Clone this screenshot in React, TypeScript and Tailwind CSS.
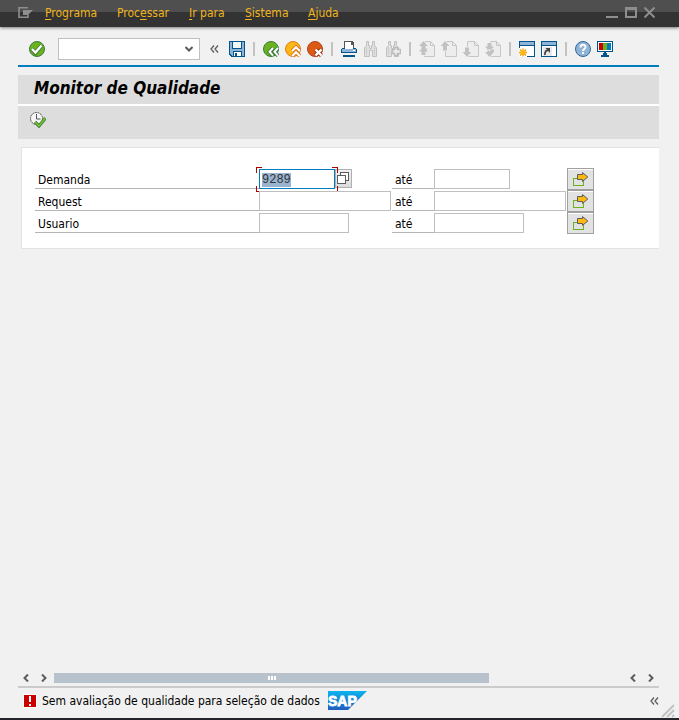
import { useEffect, useRef } from "react";
import type { ReactNode } from "react";

function Icon({ children }: { children: ReactNode }) {
  return (
    <svg viewBox="0 0 16 16" className="block size-4 shrink-0" aria-hidden>
      {children}
    </svg>
  );
}

function ToolButton({ label, disabled, children }: { label: string; disabled?: boolean; children: ReactNode }) {
  return (
    <button type="button" aria-label={label} title={label} disabled={disabled} className="block size-4 shrink-0">
      <Icon>{children}</Icon>
    </button>
  );
}

function Separator() {
  return <span className="mx-0.5 h-3.5 w-0.5 shrink-0 bg-[#c2c2c2]" />;
}

function DoubleChevron() {
  return (
    <svg viewBox="0 0 9 8" className="block h-2 w-[9px]" aria-hidden>
      <path d="M4 .5 1 4l3 3.5M8 .5 5 4l3 3.5" fill="none" stroke="#5c5c5c" strokeWidth="1.3" />
    </svg>
  );
}

function BackGlyph() {
  return (
    <>
      <circle cx="8" cy="8" r="7.500" fill="#6cb11e" stroke="#3c7d3a" />
      <path d="M10 7 6.500 10.800 10 14.600M15 7l-3.500 3.800 3.500 3.800" fill="none" stroke="#3c7d3a" strokeWidth="4" />
      <path d="M10 7 6.500 10.800 10 14.600M15 7l-3.500 3.800 3.500 3.800" fill="none" stroke="#fff" strokeWidth="2" />
    </>
  );
}

function ExitGlyph() {
  return (
    <>
      <circle cx="8" cy="8" r="7.500" fill="#fdb913" stroke="#e07b1c" />
      <path d="M7.200 10 11 6.200l3.800 3.800M7.200 15 11 11.200l3.800 3.800" fill="none" stroke="#e07b1c" strokeWidth="4" />
      <path d="M7.200 10 11 6.200l3.800 3.800M7.200 15 11 11.200l3.800 3.800" fill="none" stroke="#fff" strokeWidth="2" />
    </>
  );
}

function CancelGlyph() {
  return (
    <>
      <circle cx="8" cy="8" r="7.500" fill="#dc5a14" stroke="#ae4420" />
      <path d="m8.500 8.500 6 6M14.500 8.500l-6 6" stroke="#a33a18" strokeWidth="4.400" />
      <path d="m8.500 8.500 6 6M14.500 8.500l-6 6" stroke="#fff" strokeWidth="2.400" />
    </>
  );
}

function SaveGlyph() {
  return (
    <g shapeRendering="crispEdges">
      <path d="M0 0h16v16H2L0 14z" fill="#00568c" />
      <path d="M1 1h14v14H3L1 13z" fill="#91b3d7" />
      <path d="M3 1h10v7H3z" fill="#00568c" />
      <path d="M4 1h8v6H4z" fill="#f6f6f6" />
      <path d="M4 10h9v5H4z" fill="#00568c" />
      <path d="M5 11h7v4H5z" fill="#fff" />
      <path d="M6 12h2v3H6z" fill="#00568c" />
    </g>
  );
}

function PrintGlyph() {
  return (
    <g shapeRendering="crispEdges">
      <path d="M3 0h8l2 2v6H3z" fill="#555" />
      <path d="M4 1h6v3h2v4H4z" fill="#fff" />
      <path d="M10 1h1v2h2v1h-3z" fill="#555" />
      <path d="M1 7h14v1h1v4H0V8h1z" fill="#00568c" />
      <path d="M1 8h14v3H1z" fill="#91b3d7" />
      <path d="M4 6h8v2H4z" fill="#fff" />
      <path d="M12 9h2v1h-2z" fill="#fff" />
      <path d="M2 14h12v2H2z" fill="#00568c" />
    </g>
  );
}

function BinocularsGlyph({ plus }: { plus?: boolean }) {
  return (
    <>
      <path
        d="M3.500.5h2v4h1v3h2v-3h1v-4h2v4l2 2v9h-4v-6h-3v6h-5v-9l2-2z"
        fill="#e0e0e0"
        stroke="#c0c0c0"
      />
      <path d="M3.500 6v8M11.500 6v8" stroke="#cdcdcd" />
      {plus && (
        <path d="M9.500 6.500h3v2h3v4h-3v2h-3v-2h-2v-4h2z" fill="#ededed" stroke="#bcbcbc" strokeWidth="1.500" />
      )}
    </>
  );
}

const pageArrows = {
  first: "M4.500 0 9 5H6.500v2.500H9L6.500 10v4h-4v-4L0 11 2.500 8V5H0zM4.500 5.500 9 10.500H0z",
  previous: "M4 0 8.500 5H6v4.500H2V5H-.5z",
  next: "M4 16-.5 11H2V6.500h4V11h2.500z",
  last: "M4.500 16 0 11h2.500V8.500H9V11zM4.500 10.500 9 5.500H6.500V2h-4v3.500H0z",
};

function PageGlyph({ mode }: { mode: keyof typeof pageArrows }) {
  const narrow = mode === "previous" || mode === "next";
  return (
    <>
      <path d={narrow ? "M4.500.5h7l4 4v11h-11z" : "M5.500.5h6l4 4v11h-10z"} fill="#ededed" stroke="#c6c6c6" />
      <path d="M11.500.5v4h4" fill="none" stroke="#c6c6c6" />
      <path d={pageArrows[mode]} fill="#c2c2c2" stroke="#f1f1f1" strokeWidth="1.600" paintOrder="stroke" />
    </>
  );
}

function WindowFrame() {
  return (
    <g shapeRendering="crispEdges">
      <path d="M0 0h16v16H0z" fill="#00568c" />
      <path d="M1 1h14v3H1z" fill="#91b3d7" />
      <path d="M1 5h14v10H1z" fill="#fff" />
    </g>
  );
}

function NewSessionGlyph() {
  return (
    <>
      <WindowFrame />
      <path d="M0 7h8v9H0z" fill="#fff" />
      <path d="M4 7.500v8M0 11.500h8M1 8.500l6 6M7 8.500l-6 6" stroke="#ee9a00" strokeWidth="1.300" />
      <circle cx="4" cy="11.500" r="2.500" fill="#fdb913" />
    </>
  );
}

function ShortcutGlyph() {
  return (
    <>
      <WindowFrame />
      <path d="M2 6h9v9H2z" fill="#e8e8e8" />
      <path d="M4 14c-.5-3 1-5 4-5" fill="none" stroke="#444" strokeWidth="1.800" />
      <path d="M4.500 7H9v5z" fill="#444" />
    </>
  );
}

function HelpGlyph() {
  return (
    <>
      <circle cx="8" cy="8" r="7.500" fill="#91b3d7" stroke="#2f6a9a" />
      <path d="M5.500 6.500C5.500 3 10.500 3 10.500 6c0 2-2.500 2-2.500 4" fill="none" stroke="#fff" strokeWidth="1.900" />
      <path d="M7 11h2v2H7z" fill="#fff" />
    </>
  );
}

function MonitorGlyph() {
  return (
    <g shapeRendering="crispEdges">
      <path d="M0 0h16v11H0zM7 11h2v3H7zM4 14h8v2H4z" fill="#00568c" />
      <path d="M1 1h14v9H1z" fill="#fff" />
      <path d="M2 2h4v7H2z" fill="#c00" />
      <path d="M6 2h4v7H6z" fill="#6cb11e" />
      <path d="M10 2h4v7h-4z" fill="#007cc0" />
      <path d="M6 12h4v2H6z" fill="#00568c" />
    </g>
  );
}

const menus = [
  { before: "", key: "P", after: "rograma", width: "w-[72px]" },
  { before: "Proc", key: "e", after: "ssar", width: "w-[72px]" },
  { before: "", key: "I", after: "r para", width: "w-14" },
  { before: "", key: "S", after: "istema", width: "w-[63px]" },
  { before: "", key: "A", after: "juda", width: "w-14" },
];

function MenuBar() {
  return (
    <header className="flex h-[27px] items-center bg-[linear-gradient(#4f4f4f_12px,#333_12px)] pb-0.5 pl-[18px] pr-6 text-[#f0b41c] shadow-[0_1px_3px_#00000080]">
      <svg viewBox="0 0 15 11" className="mr-3 block h-[11px] w-[15px] shrink-0" aria-hidden>
        <path d="M10 .8H1v9.400h9V8" fill="none" stroke="#8e8e8e" strokeWidth="1.600" />
        <path d="M5 3h10l-5 5H5z" fill="#8e8e8e" />
      </svg>
      <nav className="flex">
        {menus.map((m) => (
          <button key={m.key} type="button" className={`${m.width} text-left whitespace-nowrap`}>
            {m.before}
            <span className="underline underline-offset-2">{m.key}</span>
            {m.after}
          </button>
        ))}
      </nav>
      <div className="ml-auto flex items-center gap-[7px]">
        <button type="button" aria-label="Minimizar" className="flex h-[11px] w-3 items-end">
          <span className="h-0.5 w-3 bg-[#8e8e8e]" />
        </button>
        <button type="button" aria-label="Maximizar" className="h-[11px] w-3 border-2 border-t-[3px] border-[#8e8e8e]" />
        <button type="button" aria-label="Fechar">
          <svg viewBox="0 0 11 11" className="block size-[11px]" aria-hidden>
            <path d="m.5.5 10 10M10.500.5l-10 10" stroke="#8e8e8e" strokeWidth="2" />
          </svg>
        </button>
      </div>
    </header>
  );
}

function Toolbar() {
  return (
    <div className="ml-[18px] mr-5 mt-[5px] flex h-[35px] items-center gap-1.5 border-b-2 border-[#007cc0] pl-[11px]">
      <ToolButton label="Continuar">
        <circle cx="8" cy="8" r="7.500" fill="#6cb11e" stroke="#3c7d3a" />
        <path d="m3 8 3.500 4L12.500 4.500" fill="none" stroke="#3c7d3a" strokeWidth="4" />
        <path d="m3 8 3.500 3.500 6-7" fill="none" stroke="#fff" strokeWidth="2.400" />
      </ToolButton>
      <div className="relative ml-[7px] h-[22px] w-[142px] shrink-0">
        <select aria-label="Comando" className="block size-full appearance-none border border-[#bfbfbf] bg-white">
          <option value=""></option>
        </select>
        <svg viewBox="0 0 8 6" className="pointer-events-none absolute right-[7px] top-2 h-1.5 w-2" aria-hidden>
          <path d="m.5 1 3.500 3.500L7.500 1" fill="none" stroke="#5c5c5c" strokeWidth="2" />
        </svg>
      </div>
      <button type="button" aria-label="Recolher" className="mx-1">
        <DoubleChevron />
      </button>
      <ToolButton label="Gravar"><SaveGlyph /></ToolButton>
      <Separator />
      <ToolButton label="Voltar"><BackGlyph /></ToolButton>
      <ToolButton label="Sair"><ExitGlyph /></ToolButton>
      <ToolButton label="Cancelar"><CancelGlyph /></ToolButton>
      <Separator />
      <ToolButton label="Imprimir"><PrintGlyph /></ToolButton>
      <ToolButton label="Procurar" disabled><BinocularsGlyph /></ToolButton>
      <ToolButton label="Continuar procura" disabled><BinocularsGlyph plus /></ToolButton>
      <Separator />
      <ToolButton label="Primeira página" disabled><PageGlyph mode="first" /></ToolButton>
      <ToolButton label="Página anterior" disabled><PageGlyph mode="previous" /></ToolButton>
      <ToolButton label="Página seguinte" disabled><PageGlyph mode="next" /></ToolButton>
      <ToolButton label="Última página" disabled><PageGlyph mode="last" /></ToolButton>
      <Separator />
      <ToolButton label="Novo modo"><NewSessionGlyph /></ToolButton>
      <ToolButton label="Criar atalho"><ShortcutGlyph /></ToolButton>
      <Separator />
      <ToolButton label="Ajuda"><HelpGlyph /></ToolButton>
      <ToolButton label="Layout local"><MonitorGlyph /></ToolButton>
    </div>
  );
}

function FocusCorners() {
  return (
    <div className="pointer-events-none absolute -inset-x-[3px] -inset-y-0.5" aria-hidden>
      <span className="absolute left-0 top-0 size-1.5 border-l border-t border-[#b00000]" />
      <span className="absolute right-0 top-0 size-1.5 border-r border-t border-[#b00000]" />
      <span className="absolute bottom-0 left-0 size-1.5 border-b border-l border-[#b00000]" />
      <span className="absolute bottom-0 right-0 size-1.5 border-b border-r border-[#b00000]" />
    </div>
  );
}

const rows = [
  { id: "demanda", label: "Demanda", width: "w-[76px]" },
  { id: "request", label: "Request", width: "w-[132px]" },
  { id: "usuario", label: "Usuario", width: "w-[90px]" },
];

const field = "block h-5 border bg-white px-0.5 pt-0.5 font-['Liberation_Mono',monospace] text-xs leading-4 text-[#333] outline-none";

function SelectionForm() {
  const first = useRef<HTMLInputElement>(null);
  useEffect(() => {
    first.current?.focus();
    first.current?.select();
  }, []);

  return (
    <form className="ml-[21px] mr-5 mt-2 border border-r-0 border-[#e3e3e3] bg-white pb-3.5 pl-[13px] pt-5">
      {rows.map((r, i) => (
        <div key={r.id} className="grid h-[22px] grid-cols-[224px_133px_42px_133px_27px]">
          <label htmlFor={r.id} className="h-[21px] border-b border-[#b4b4b4] pl-[3px] leading-6">
            {r.label}
          </label>
          <div className="flex pt-px">
            <div className="relative">
              {i === 0 ? (
                <>
                  <input
                    ref={first}
                    id={r.id}
                    defaultValue="9289"
                    className={`${field} ${r.width} border-[#007cc0] selection:bg-[#99b4d1] selection:text-[#333]`}
                  />
                  <FocusCorners />
                </>
              ) : (
                <input id={r.id} className={`${field} ${r.width} border-[#bfbfbf]`} />
              )}
            </div>
            {i === 0 && (
              <button
                type="button"
                aria-label="Ajuda para entradas possíveis"
                className="h-[19px] w-[17px] border border-[#b0b0b0] bg-linear-to-b from-[#f0f0f0] to-[#dcdcdc] pl-px pb-px"
              >
                <svg viewBox="0 0 12 12" className="block size-3" shapeRendering="crispEdges" aria-hidden>
                  <path d="M3.500 3V.5h8v8H9M.5 3.500h8v8h-8z" fill="#fff" stroke="#5c5c5c" />
                </svg>
              </button>
            )}
          </div>
          <label htmlFor={`${r.id}-ate`} className="h-[21px] border-b border-[#b4b4b4] pl-[3px] leading-6">
            até
          </label>
          <div className="pt-px">
            <input id={`${r.id}-ate`} className={`${field} ${r.width} border-[#bfbfbf]`} />
          </div>
          <button
            type="button"
            aria-label={`Seleção múltipla ${r.label}`}
            className="flex justify-center border border-[#a0a0a0] bg-[#e2e2e2] pt-[3px] shadow-[inset_0_1px_#fff]"
          >
            <svg viewBox="0 0 16 14" className="block h-3.5 w-4" aria-hidden>
              <path d="M.5 6.500h10v7H.5z" fill="none" stroke="#6cb11e" shapeRendering="crispEdges" />
              <path d="M4.500 2.500h5V.6L14.800 5l-5.300 4.400V7.500h-5z" fill="#fdb913" stroke="#5c5c5c" />
            </svg>
          </button>
        </div>
      ))}
    </form>
  );
}

function Arrow({ label, right }: { label: string; right?: boolean }) {
  return (
    <button type="button" aria-label={label}>
      <svg viewBox="0 0 6 8" className="block h-2 w-1.5" aria-hidden>
        <path d={right ? "M1 .5 4.500 4 1 7.500" : "M5 .5 1.500 4 5 7.500"} fill="none" stroke="#5c5c5c" strokeWidth="2" />
      </svg>
    </button>
  );
}

function ScrollBar() {
  return (
    <div className="ml-[18px] mr-5 flex h-4 items-center pl-[5px] pr-[5px]">
      <div className="flex gap-3">
        <Arrow label="Rolar para a esquerda" />
        <Arrow label="Rolar para a direita" right />
      </div>
      <div className="mx-[7px] flex-1">
        <div className="flex h-2.5 w-13/17 items-center justify-center gap-px bg-[#b8c2cc]">
          <span className="h-1 w-0.5 bg-white" />
          <span className="h-1 w-0.5 bg-white" />
          <span className="h-1 w-0.5 bg-white" />
        </div>
      </div>
      <div className="flex gap-3">
        <Arrow label="Página à esquerda" />
        <Arrow label="Página à direita" right />
      </div>
    </div>
  );
}

function SapLogo() {
  return (
    <svg viewBox="0 0 39 19" className="ml-2 block h-[19px] w-[39px] shrink-0" role="img" aria-label="SAP">
      <defs>
        <linearGradient id="sap" x1="0" y1="0" x2="0" y2="1">
          <stop offset="0" stopColor="#0ab4ee" />
          <stop offset="1" stopColor="#1f5cbc" />
        </linearGradient>
      </defs>
      <path d="M0 0h39L20 19H0z" fill="url(#sap)" />
      <text x="0" y="15" fill="#fff" fontFamily="Liberation Sans, sans-serif" fontWeight="700" fontSize="14" stroke="#fff" strokeWidth=".8">
        SAP
      </text>
    </svg>
  );
}

function StatusBar() {
  return (
    <footer className="relative border-b-2 border-[#24242a]">
      <div className="ml-[18px] mr-5 flex h-8 items-center border-t-2 border-[#cbcbcb] pb-[5px] pl-[5px]">
        <svg viewBox="0 0 14 14" className="mr-[5px] block size-3.5 shrink-0" shapeRendering="crispEdges" aria-hidden>
          <path d="M0 0h14v14H0z" fill="#fff" />
          <path d="M1 1h12v12H1z" fill="#c00" />
          <path d="M6 2h2v6H6zM6 10h2v2H6z" fill="#fff" />
        </svg>
        <span className="whitespace-nowrap">Sem avaliação de qualidade para seleção de dados</span>
        <SapLogo />
        <button type="button" aria-label="Mostrar detalhes" className="ml-auto">
          <DoubleChevron />
        </button>
      </div>
      <svg viewBox="0 0 14 14" className="absolute bottom-0 right-1 size-3.5" aria-hidden>
        <path d="M1 13 13 1M6 13l7-7M11 13l2-2" stroke="#c2c2c2" strokeWidth="1.800" />
      </svg>
    </footer>
  );
}

export default function App() {
  return (
    <div className="flex min-h-screen flex-col bg-[#f1f1f1] font-['DejaVu_Sans_Condensed','DejaVu_Sans',sans-serif] text-xs text-black">
      <MenuBar />
      <Toolbar />
      <main className="flex-1">
        <h1 className="ml-[18px] mr-5 mt-2 h-[31px] border-b-2 border-white bg-[#ddd] pl-4 text-[17px] leading-[26px] font-bold italic">
          Monitor de Qualidade
        </h1>
        <div className="ml-[18px] mr-5 flex h-[33px] items-start bg-[#ddd] pl-3 pt-1.5">
          <ToolButton label="Executar">
            <circle cx="6.500" cy="6.500" r="6" fill="#f4f4f4" stroke="#555" strokeDasharray="2 .6" />
            <path d="M6.500 2v5h4" fill="none" stroke="#555" />
            <path d="m5 10 4 4 6.500-8" fill="none" stroke="#3c7d3a" strokeWidth="3.200" />
            <path d="m5 10 4 4 6.500-8" fill="none" stroke="#7fc832" strokeWidth="1.500" />
          </ToolButton>
        </div>
        <SelectionForm />
      </main>
      <ScrollBar />
      <StatusBar />
    </div>
  );
}
